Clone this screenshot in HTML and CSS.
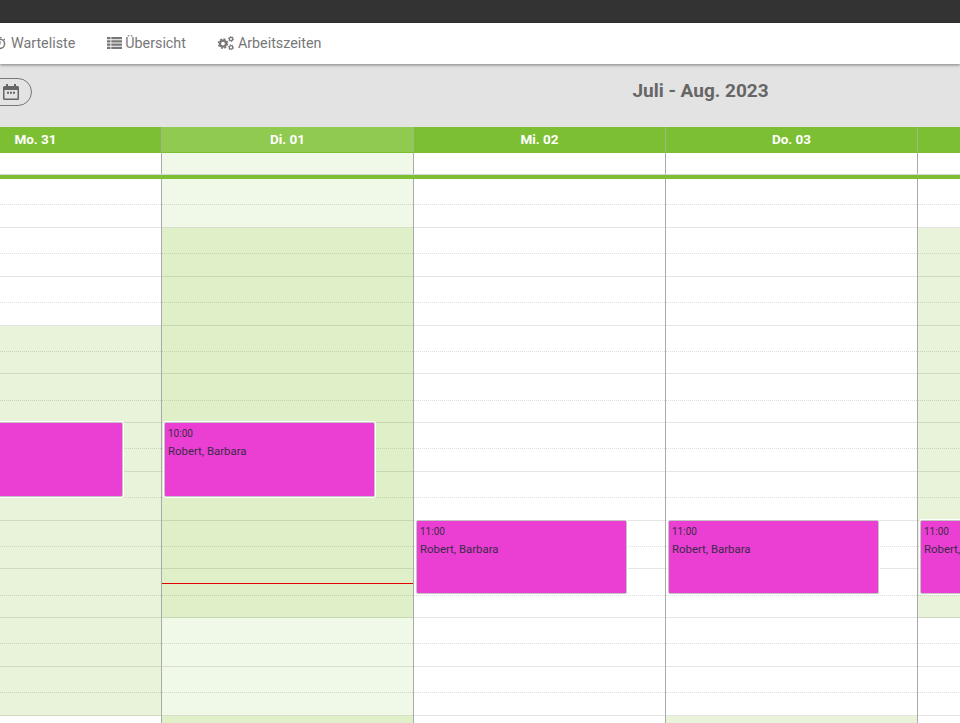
FILE: index.html
```html
<!DOCTYPE html>
<html lang="de">
<head>
<meta charset="utf-8">
<title>Kalender</title>
<link rel="stylesheet" href="styles.css">
</head>
<body>
<div class="page">
  <div class="topbar"></div>
  <nav class="nav">
    <a class="nav-item nav-first">
      <svg class="ico-clock" viewBox="0 0 14 14"><path d="M7 3.2a4.6 4.6 0 1 0 0 9.2 4.6 4.6 0 0 0 0-9.2z" fill="none" stroke="#777" stroke-width="1.5"/><path d="M5.5.9h3v1.3h-3zM11.2 2.6l1 1-1 1-1-1z" fill="#777"/><path d="M7 5v3.2" stroke="#777" stroke-width="1.2"/></svg>
      <span>Warteliste</span>
    </a>
    <a class="nav-item nav-list">
      <svg class="ico-list" viewBox="0 0 15 12"><path d="M0 0h3.500v2.200H0zM4.300 0H15v2.200H4.300zM0 3.270h3.500v2.200H0zM4.300 3.270H15v2.200H4.300zM0 6.530h3.500v2.200H0zM4.300 6.530H15v2.200H4.300zM0 9.800h3.500V12H0zM4.300 9.800H15V12H4.300z" fill="#777"/></svg>
      <span>Übersicht</span>
    </a>
    <a class="nav-item">
      <svg class="ico-cogs" viewBox="0 0 16 14"><g fill="none" stroke="#777"><circle cx="5" cy="7.600" r="3" stroke-width="2.200"/><circle cx="5" cy="7.600" r="4.500" stroke-width="1.600" stroke-dasharray="2 1.530"/><circle cx="13" cy="3" r="1.700" stroke-width="1.300"/><circle cx="13" cy="3" r="2.600" stroke-width="1" stroke-dasharray="1.200 1.520"/><circle cx="13" cy="11.400" r="1.700" stroke-width="1.300"/><circle cx="13" cy="11.400" r="2.600" stroke-width="1" stroke-dasharray="1.200 1.520"/></g></svg>
      <span>Arbeitszeiten</span>
    </a>
  </nav>
  <div class="toolbar">
    <button class="date-btn" type="button">
      <svg class="ico-cal" viewBox="0 0 16 16"><path d="M3 0h2v2h6V0h2v2h1.500A1.500 1.500 0 0 1 16 3.500v11a1.500 1.500 0 0 1-1.500 1.500h-13A1.500 1.500 0 0 1 0 14.500v-11A1.500 1.500 0 0 1 1.500 2H3z" fill="#666"/><path d="M1.500 6h13v8.500h-13z" fill="#e3e3e3"/><path d="M4 7.800h2v2H4zM7 7.800h2v2H7zM10 7.800h2v2h-2z" fill="#666"/></svg>
    </button>
    <h1 class="title">Juli - Aug. 2023</h1>
  </div>
  <div class="calendar">
    <div class="days head">
      <div class="head-cell">Mo. 31</div>
      <div class="head-cell is-today">Di. 01</div>
      <div class="head-cell">Mi. 02</div>
      <div class="head-cell">Do. 03</div>
      <div class="head-cell">Fr. 04</div>
    </div>
    <div class="days allday">
      <div class="allday-cell"></div>
      <div class="allday-cell today-soft"></div>
      <div class="allday-cell"></div>
      <div class="allday-cell"></div>
      <div class="allday-cell"></div>
    </div>
    <div class="band"></div>
    <div class="days grid">
      <div class="day">
        <div class="hour first"><div class="half"></div></div>
        <div class="hour"><div class="half"></div></div>
        <div class="hour"><div class="half"></div></div>
        <div class="hour open"><div class="half"></div></div>
        <div class="hour open"><div class="half"></div></div>
        <div class="hour open"><div class="half"></div></div>
        <div class="hour open"><div class="half"></div></div>
        <div class="hour open"><div class="half"></div></div>
        <div class="hour open"><div class="half"></div></div>
        <div class="hour open"><div class="half"></div></div>
        <div class="hour open"><div class="half"></div></div>
        <div class="hour"><div class="half"></div></div>
        <div class="event at-ten"><span class="time">10:00</span><span class="name">Robert, Barbara</span></div>
      </div>
      <div class="day">
        <div class="hour first today-soft"><div class="half"></div></div>
        <div class="hour today-open"><div class="half"></div></div>
        <div class="hour today-open"><div class="half"></div></div>
        <div class="hour today-open"><div class="half"></div></div>
        <div class="hour today-open"><div class="half"></div></div>
        <div class="hour today-open"><div class="half"></div></div>
        <div class="hour today-open"><div class="half"></div></div>
        <div class="hour today-open"><div class="half"></div></div>
        <div class="hour today-open"><div class="half"></div></div>
        <div class="hour today-soft"><div class="half"></div></div>
        <div class="hour today-soft"><div class="half"></div></div>
        <div class="hour today-open"><div class="half"></div></div>
        <div class="event at-ten"><span class="time">10:00</span><span class="name">Robert, Barbara</span></div>
        <div class="now"></div>
      </div>
      <div class="day">
        <div class="hour first"><div class="half"></div></div>
        <div class="hour"><div class="half"></div></div>
        <div class="hour"><div class="half"></div></div>
        <div class="hour"><div class="half"></div></div>
        <div class="hour"><div class="half"></div></div>
        <div class="hour"><div class="half"></div></div>
        <div class="hour"><div class="half"></div></div>
        <div class="hour"><div class="half"></div></div>
        <div class="hour"><div class="half"></div></div>
        <div class="hour"><div class="half"></div></div>
        <div class="hour"><div class="half"></div></div>
        <div class="hour"><div class="half"></div></div>
        <div class="event at-eleven"><span class="time">11:00</span><span class="name">Robert, Barbara</span></div>
      </div>
      <div class="day">
        <div class="hour first"><div class="half"></div></div>
        <div class="hour"><div class="half"></div></div>
        <div class="hour"><div class="half"></div></div>
        <div class="hour"><div class="half"></div></div>
        <div class="hour"><div class="half"></div></div>
        <div class="hour"><div class="half"></div></div>
        <div class="hour"><div class="half"></div></div>
        <div class="hour"><div class="half"></div></div>
        <div class="hour"><div class="half"></div></div>
        <div class="hour"><div class="half"></div></div>
        <div class="hour"><div class="half"></div></div>
        <div class="hour open"><div class="half"></div></div>
        <div class="event at-eleven"><span class="time">11:00</span><span class="name">Robert, Barbara</span></div>
      </div>
      <div class="day">
        <div class="hour first"><div class="half"></div></div>
        <div class="hour open"><div class="half"></div></div>
        <div class="hour open"><div class="half"></div></div>
        <div class="hour open"><div class="half"></div></div>
        <div class="hour open"><div class="half"></div></div>
        <div class="hour open"><div class="half"></div></div>
        <div class="hour open"><div class="half"></div></div>
        <div class="hour open"><div class="half"></div></div>
        <div class="hour open"><div class="half"></div></div>
        <div class="hour"><div class="half"></div></div>
        <div class="hour"><div class="half"></div></div>
        <div class="hour"><div class="half"></div></div>
        <div class="event at-eleven"><span class="time">11:00</span><span class="name">Robert, Barbara</span></div>
      </div>
    </div>
  </div>
</div>
</body>
</html>
```
FILE: styles.css
```css
* { box-sizing: border-box; }

html, body {
  margin: 0;
  height: 100%;
  overflow: hidden;
  background: #fff;
  font-family: Roboto, "Liberation Sans", sans-serif;
}

.page {
  display: flex;
  flex-direction: column;
  height: 723px;
  overflow: hidden;
}

.topbar {
  flex: 0 0 23px;
  background: #333;
}

.nav {
  flex: 0 0 41px;
  display: flex;
  align-items: center;
  gap: 32px;
  padding-bottom: 1px;
  background: #fff;
  color: #777;
  font-size: 14.3px;
  box-shadow: 0 1px 3px rgba(0, 0, 0, 0.45);
  position: relative;
  z-index: 2;
}

.nav-item {
  display: flex;
  align-items: center;
  gap: 4px;
}

.nav-first { margin-left: -7px; }
.nav-list { gap: 3px; }

.ico-clock { width: 14px; height: 14px; }
.ico-list { width: 15px; height: 12px; }
.ico-cogs { width: 16px; height: 14px; }

.toolbar {
  flex: 0 0 63px;
  display: flex;
  align-items: flex-start;
  padding-top: 14px;
  background: #e3e3e3;
}

.date-btn {
  flex: 0 0 52px;
  height: 28px;
  margin: 0 0 0 -20px;
  padding: 0 0 0 22px;
  display: flex;
  align-items: center;
  background: transparent;
  border: 1px solid #777;
  border-radius: 14px;
}

.ico-cal { width: 16px; height: 16px; display: block; }

.title {
  flex: 1;
  margin: 3px 0 0 409px;
  text-align: center;
  color: #666;
  font-size: 19px;
  font-weight: 700;
  line-height: 20px;
}

.calendar {
  flex: 1;
  min-height: 0;
  overflow: hidden;
}

.days {
  display: grid;
  grid-template-columns: repeat(5, 252px);
  width: 1260px;
  margin-left: -90px;
}

.head-cell {
  height: 26px;
  line-height: 25px;
  text-align: center;
  color: #fff;
  background: #7dbf33;
  font-size: 13.5px;
  font-weight: 700;
  border-right: 1px solid #9fb886;
}

.head-cell.is-today {
  background: #90ca51;
  border-bottom: 1px solid #7dbf33;
}

.allday {
  border-bottom: 1px solid #d5d5d5;
}

.allday-cell {
  height: 21px;
  border-right: 1px solid #aaa;
}

.band {
  height: 4.25px;
  background: #7dbf33;
}

.day {
  position: relative;
  border-right: 1px solid #aaa;
}

.hour {
  height: 48.75px;
  border-bottom: 1px solid rgba(0, 0, 0, 0.1);
}

.half {
  height: 26.4px;
  border-bottom: 1px dotted rgba(0, 0, 0, 0.13);
}

.hour.first .half { height: 25.4px; }

.open { background: #e8f3d9; }
.today-open { background: #dff0c8; }
.today-soft { background: #f0f8e8; }

.event {
  position: absolute;
  left: 2px;
  width: 211px;
  display: flex;
  flex-direction: column;
  padding: 5px 3px;
  color: #3a2a4a;
  background: #eb3fd3;
  border: 1px solid #c4c4c4;
  border-radius: 2px;
  box-shadow: 0 0 0 1px #fff;
  font-size: 11.4px;
}

.at-ten { top: 242.75px; height: 75px; }
.at-eleven { top: 340.75px; height: 74px; }

.time {
  font-size: 10px;
  line-height: 12px;
}

.name {
  margin-top: 5px;
  line-height: 13px;
}

.now {
  position: absolute;
  top: 404px;
  left: 0;
  right: 0;
  height: 1px;
  background: #e00000;
}
```
